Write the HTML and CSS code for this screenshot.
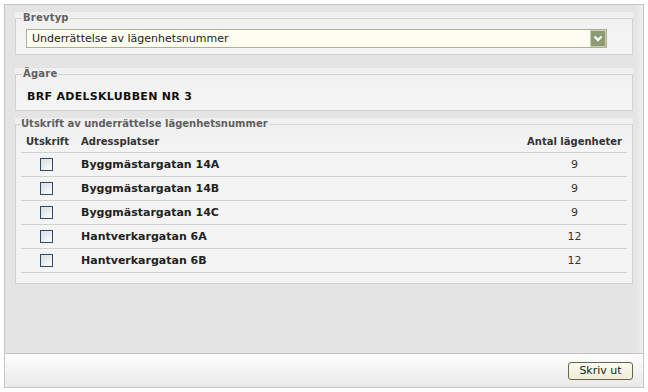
FILE: index.html
```html
<!DOCTYPE html>
<html lang="sv">
<head>
    <meta charset="UTF-8">
    <title>Underrättelse av lägenhetsnummer</title>
    <link rel="stylesheet" href="styles.css">
</head>
<body>
    <div class="panel">
        <div class="main">
            <div class="group">
                <fieldset class="brevtyp">
                    <legend>Brevtyp</legend>
                    <div class="select">
                        <span>Underrättelse av lägenhetsnummer</span>
                        <span class="arrow">
                            <svg width="14" height="15" viewBox="0 0 14 15">
                                <path d="M3.5 5.5 L7 9 L10.5 5.5" fill="none" stroke="#fff" stroke-width="2.4"/>
                            </svg>
                        </span>
                    </div>
                </fieldset>
            </div>

            <div class="group owner-group">
                <fieldset class="owner">
                    <legend>Ägare</legend>
                    <div class="owner-name">BRF ADELSKLUBBEN NR 3</div>
                </fieldset>
            </div>

            <div class="group list-group">
                <fieldset class="list">
                    <legend>Utskrift av underrättelse lägenhetsnummer</legend>
                    <table>
                        <thead>
                            <tr>
                                <th class="col-check">Utskrift</th>
                                <th>Adressplatser</th>
                                <th class="col-count">Antal lägenheter</th>
                            </tr>
                        </thead>
                        <tbody>
                            <tr>
                                <td class="col-check"><input type="checkbox"></td>
                                <td class="addr">Byggmästargatan 14A</td>
                                <td class="num">9</td>
                            </tr>
                            <tr>
                                <td class="col-check"><input type="checkbox"></td>
                                <td class="addr">Byggmästargatan 14B</td>
                                <td class="num">9</td>
                            </tr>
                            <tr>
                                <td class="col-check"><input type="checkbox"></td>
                                <td class="addr">Byggmästargatan 14C</td>
                                <td class="num">9</td>
                            </tr>
                            <tr>
                                <td class="col-check"><input type="checkbox"></td>
                                <td class="addr">Hantverkargatan 6A</td>
                                <td class="num">12</td>
                            </tr>
                            <tr>
                                <td class="col-check"><input type="checkbox"></td>
                                <td class="addr">Hantverkargatan 6B</td>
                                <td class="num">12</td>
                            </tr>
                        </tbody>
                    </table>
                </fieldset>
            </div>
        </div>
        <div class="footer">
            <button>Skriv ut</button>
        </div>
    </div>
</body>
</html>
```

FILE: styles.css
```css
body {
    margin: 0;
    padding: 4px;
    background-color: #fff;
    font-family: "DejaVu Sans", Verdana, sans-serif;
    font-size: 11px;
    color: #222;
}
.panel {
    width: 640px;
    border: 1px solid #c6c6c6;
    box-sizing: border-box;
    background-color: #e4e4e4;
}
.main {
    height: 348px;
    box-sizing: border-box;
    padding: 7px 10px 0 10px;
    box-shadow: inset -9px 0 6px -6px #f2f2f2;
}
.group {
    background: linear-gradient(#efefef, #f4f4f4 30px, #f4f4f4);
}
fieldset {
    margin: 0;
    padding: 0 10px;
    border: 1px solid #d2d2d2;
}
legend {
    margin-left: -4px;
    padding: 0 1px;
    font-size: 10px;
    line-height: 12px;
    font-weight: bold;
    color: #606060;
    letter-spacing: 0.2px;
}
.brevtyp {
    padding-top: 5px;
    padding-bottom: 6px;
}
.select {
    display: flex;
    align-items: center;
    justify-content: space-between;
    height: 19px;
    margin-right: 15px;
    box-sizing: border-box;
    border: 1px solid #aab290;
    background-color: #fdfdf2;
    padding-left: 5px;
}
.arrow {
    display: flex;
    align-items: center;
    justify-content: center;
    width: 16px;
    height: 17px;
    box-sizing: border-box;
    border: 1px solid #c9cdb6;
    background-color: #8d9b72;
}
.owner-group {
    margin-top: 13px;
}
.owner {
    padding-top: 10px;
    padding-bottom: 6px;
}
.owner-name {
    padding-left: 1px;
    font-weight: bold;
    line-height: 14px;
    letter-spacing: 0.3px;
    color: #111;
}
.list-group {
    margin-top: 7px;
}
.list {
    padding-top: 1px;
    padding-bottom: 10px;
}
.list legend {
    margin-left: -6px;
    letter-spacing: 0;
}
table {
    width: 606px;
    margin: 0 -5px;
    border-collapse: collapse;
    table-layout: fixed;
}
th {
    height: 21px;
    padding: 0 5px;
    font-size: 10px;
    font-weight: bold;
    text-align: left;
    color: #333;
    border-bottom: 1px solid #d0d0d0;
}
th.col-check {
    width: 45px;
}
th.col-count {
    width: 95px;
    text-align: right;
}
td {
    height: 23px;
    padding: 0 5px;
    border-bottom: 1px solid #d0d0d0;
}
td.col-check {
    padding-left: 19px;
}
td.addr {
    font-weight: bold;
    color: #222;
}
td.num {
    text-align: center;
    color: #333;
}
input[type="checkbox"] {
    appearance: none;
    display: block;
    width: 13px;
    height: 13px;
    margin: 0;
    border: 1px solid #2d4a68;
    background: linear-gradient(135deg, #d8dde2, #fbfbfb);
}
.footer {
    display: flex;
    justify-content: flex-end;
    align-items: center;
    height: 33px;
    padding-right: 10px;
    border-top: 1px solid #c4c4c4;
    background: linear-gradient(#fefefe, #e9e9e9);
}
button {
    width: 65px;
    height: 18px;
    padding: 0;
    border: 1px solid #66664a;
    border-radius: 3px;
    background: linear-gradient(#fbfbf1, #ededd6);
    font-family: "DejaVu Sans", Verdana, sans-serif;
    font-size: 11px;
    color: #222;
}
```
